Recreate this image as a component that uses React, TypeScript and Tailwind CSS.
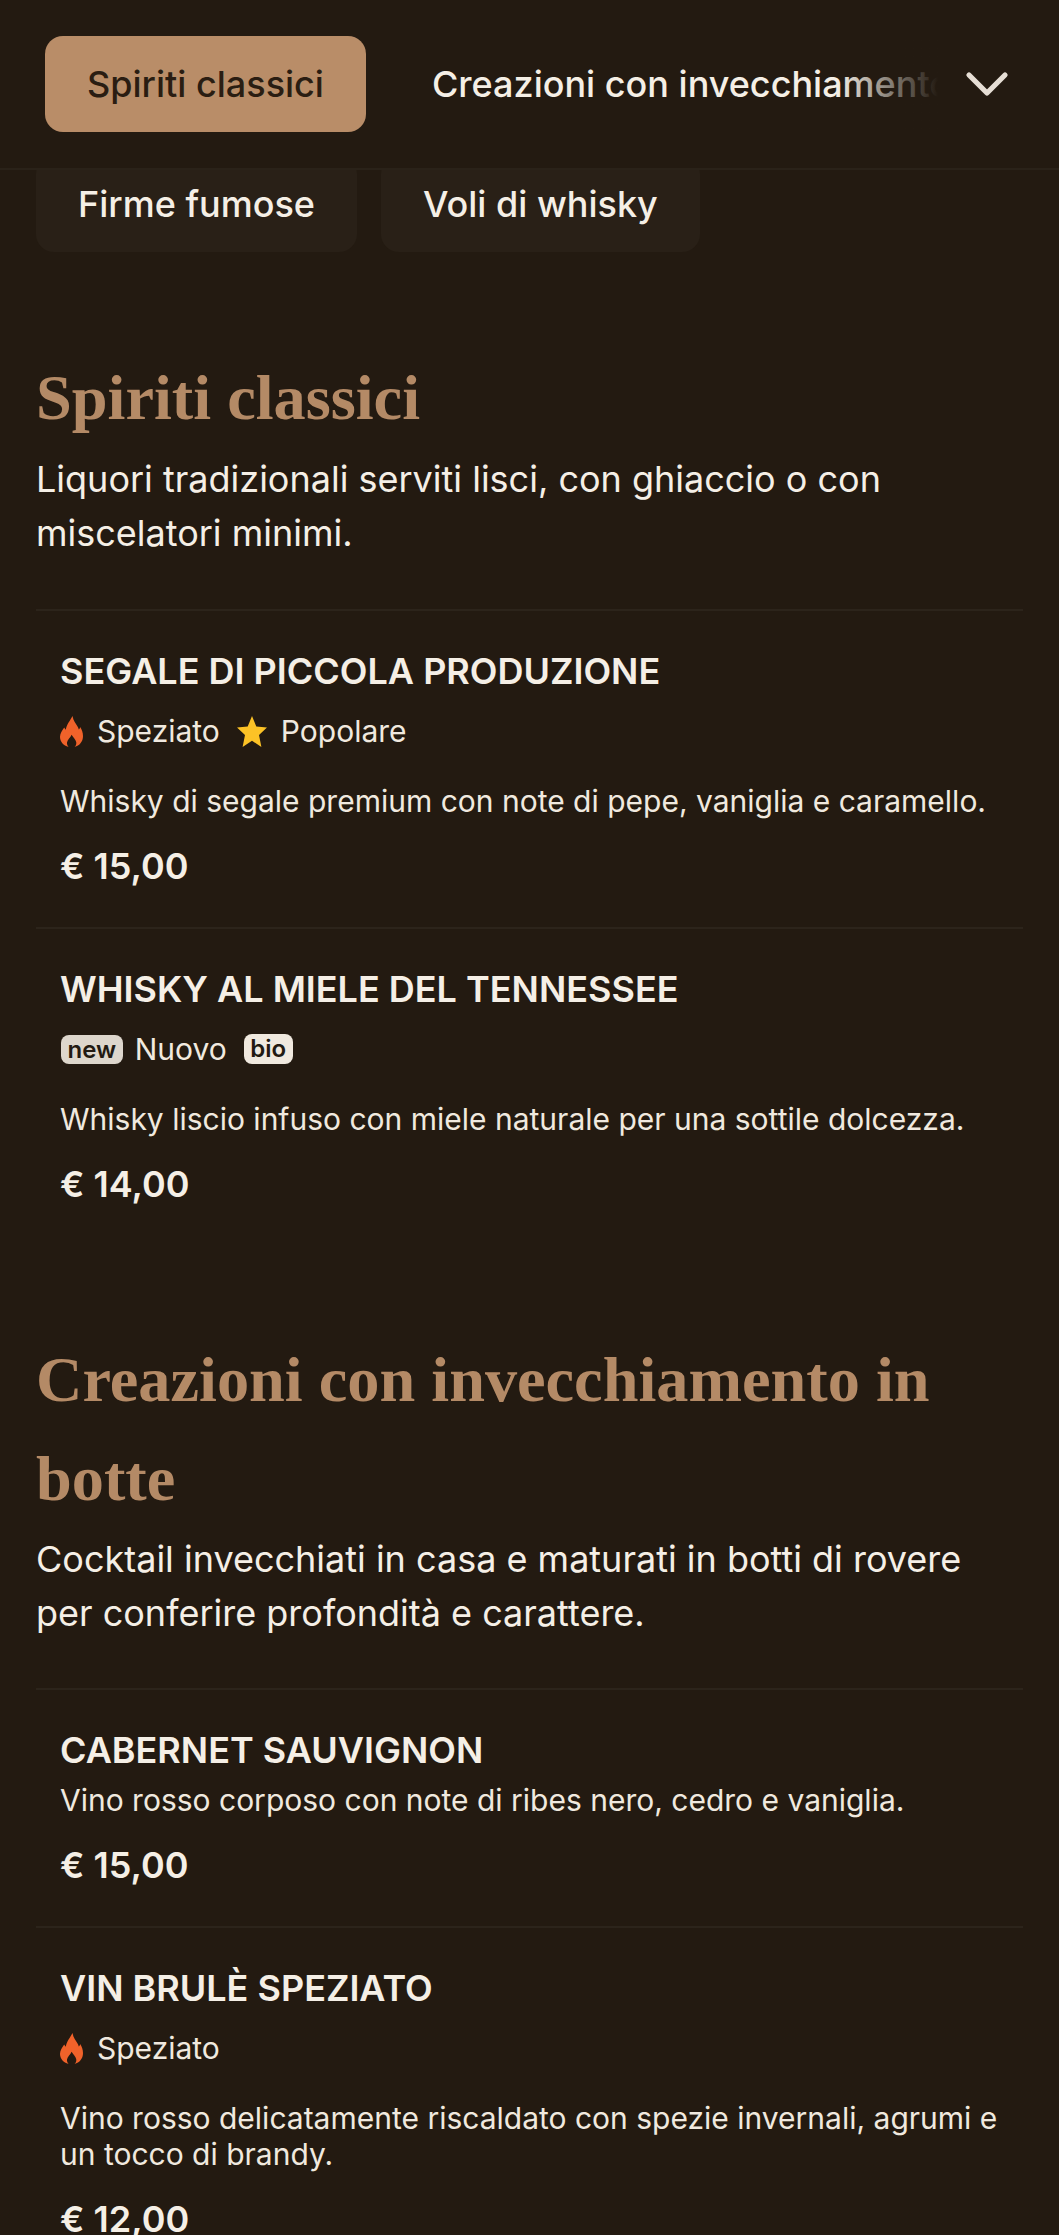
import { ChevronDown } from "lucide-react";

const sans = "font-['Inter',sans-serif]";

function Flame() {
  return (
    <svg viewBox="0 0 23 31" className="w-[23px] h-[31px] shrink-0" aria-hidden="true">
      <path
        fill="#f0622a"
        fillRule="evenodd"
        d="M12.5 0C13.3 4.6 15.6 7.4 17.4 10.2C18 11.2 18.5 12.4 18.8 13.4C19.6 12.9 20 12 20.1 11C21.9 13.6 23 16.6 23 20C23 25.6 19.6 29.6 14.6 31C16 29.6 16.6 27.8 16.2 26C15.6 23.4 13.4 21.8 11.6 18.8C10.6 21.6 7.4 23.6 7 26.6C6.8 28.2 7.4 29.8 8.6 31C3.4 29.8 0 25.8 0 20.8C0 16.8 2.6 14.2 4.2 11.4C4.8 12.4 5.2 13.2 5.8 13.8C6.4 8.6 10 5 12.5 0Z"
      />
    </svg>
  );
}

function Star() {
  return (
    <svg viewBox="0 0 30 31" className="w-[30px] h-[31px] shrink-0" aria-hidden="true">
      <polygon fill="#fcc226" points="15,0 19.3,10.6 30,11.6 22,19 24.4,31 15,24.8 5.6,31 8,19 0,11.6 10.7,10.6" />
    </svg>
  );
}

function Spicy() {
  return (
    <span className="flex items-center gap-[14px]">
      <Flame />
      <span>Speziato</span>
    </span>
  );
}

function Item({ title, tags, desc, price, className }: { title: string; tags?: React.ReactNode; desc: string; price: string; className?: string }) {
  return (
    <div className={`border-t-[2px] border-[#2c241b] px-[24px] pt-[38px] pb-[34px] ${className ?? ""}`}>
      <h3 className="text-[36px] leading-[44px] font-semibold text-[#f5efe6] uppercase">{title}</h3>
      {tags}
      <p className={`text-[30px] leading-[36px] text-[#f0e9df] ${tags ? "mt-[30px]" : "mt-[10px]"}`}>{desc}</p>
      <p className="text-[36px] leading-[54px] font-semibold text-[#f5efe6] mt-[20px]">{price}</p>
    </div>
  );
}

function Tags({ children }: { children: React.ReactNode }) {
  return <div className="flex items-center gap-[17px] mt-[16px] h-[44px] text-[30px] text-[#f0e9df]">{children}</div>;
}

export default function App() {
  return (
    <div className={`${sans} w-[1059px] h-[2235px] overflow-hidden bg-[#231a11] text-[#f5efe6]`}>
      <header className="relative z-10 h-[170px] flex items-center pl-[45px] pr-[36px] bg-[#231a11] border-b-[2px] border-[#2a2219]">
        <div className="relative flex-1 min-w-0 overflow-hidden flex items-center gap-[24px]">
          <button className="shrink-0 h-[96px] px-[42px] rounded-[18px] bg-[#b98d68] text-[#2a1d12] text-[36px] font-medium">Spiriti classici</button>
          <button className="shrink-0 h-[96px] px-[42px] text-[36px] font-medium text-[#f5efe6] whitespace-nowrap">Creazioni con invecchiamento in botte</button>
          <div className="absolute right-0 top-0 h-full w-[100px] bg-gradient-to-r from-transparent to-[#231a11]" />
        </div>
        <ChevronDown className="shrink-0 w-[72px] h-[72px] ml-[13px] text-[#e6ded5]" strokeWidth={1.75} />
      </header>

      <main className="px-[36px]">
        <div className="flex gap-[24px] -mt-[14px]">
          <div className="h-[96px] px-[42px] rounded-[18px] bg-[#292017] text-[36px] font-medium flex items-center">Firme fumose</div>
          <div className="h-[96px] px-[42px] rounded-[18px] bg-[#292017] text-[36px] font-medium flex items-center">Voli di whisky</div>
        </div>

        <h2 className="font-['Liberation_Serif',serif] font-bold text-[64.3px] leading-[99px] text-[#b48a66] mt-[96px]">Spiriti classici</h2>
        <p className="text-[36px] leading-[54px] text-[#f5efe6] mt-[5px]">Liquori tradizionali serviti lisci, con ghiaccio o con miscelatori minimi.</p>

        <Item
          className="mt-[49px]"
          title="Segale di piccola produzione"
          tags={<Tags><Spicy /><span className="flex items-center gap-[14px]"><Star /><span>Popolare</span></span></Tags>}
          desc="Whisky di segale premium con note di pepe, vaniglia e caramello."
          price="€ 15,00"
        />
        <Item
          title="Whisky al miele del Tennessee"
          tags={<Tags>
            <span className="flex items-center gap-[12px]">
              <span className="ml-[1px] rounded-[8px] bg-[#ddd6cc] text-[#221a12] text-[24px] leading-[29px] font-semibold px-[6.5px]">new</span>
              <span>Nuovo</span>
            </span>
            <span className="rounded-[8px] bg-[#f0e9df] text-[#221a12] text-[24px] leading-[30px] font-semibold px-[6.5px]">bio</span>
          </Tags>}
          desc="Whisky liscio infuso con miele naturale per una sottile dolcezza."
          price="€ 14,00"
        />

        <h2 className="font-['Liberation_Serif',serif] font-bold text-[64.3px] leading-[99px] text-[#b48a66] mt-[85px]">Creazioni con invecchiamento in botte</h2>
        <p className="text-[36px] leading-[54px] text-[#f5efe6] mt-[4px]">Cocktail invecchiati in casa e maturati in botti di rovere per conferire profondità e carattere.</p>

        <Item
          className="mt-[48px]"
          title="Cabernet Sauvignon"
          desc="Vino rosso corposo con note di ribes nero, cedro e vaniglia."
          price="€ 15,00"
        />
        <Item
          title="Vin brulè speziato"
          tags={<Tags><Spicy /></Tags>}
          desc="Vino rosso delicatamente riscaldato con spezie invernali, agrumi e un tocco di brandy."
          price="€ 12,00"
        />
      </main>
    </div>
  );
}
